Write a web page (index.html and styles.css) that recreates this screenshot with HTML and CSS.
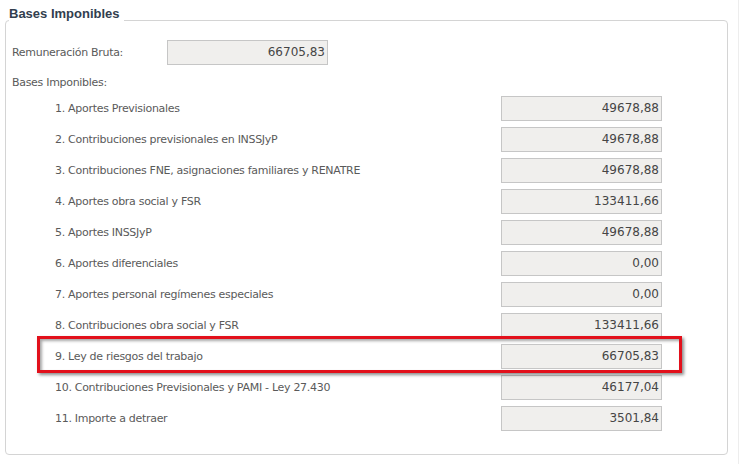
FILE: index.html
```html
<!DOCTYPE html>
<html lang="es">
<head>
<meta charset="utf-8">
<title>Bases Imponibles</title>
<link rel="stylesheet" href="styles.css">
</head>
<body>
<div class="page">
  <fieldset class="group">
    <legend class="group-title">Bases Imponibles</legend>
    <div class="content">
      <div class="bruta">
        <span class="bruta-label">Remuneración Bruta:</span>
        <div class="field">66705,83</div>
      </div>
      <div class="section-label">Bases Imponibles:</div>
      <div class="rows">
        <div class="row"><span class="row-label">1. Aportes Previsionales</span><div class="field">49678,88</div></div>
        <div class="row"><span class="row-label">2. Contribuciones previsionales en INSSJyP</span><div class="field">49678,88</div></div>
        <div class="row"><span class="row-label">3. Contribuciones FNE, asignaciones familiares y RENATRE</span><div class="field">49678,88</div></div>
        <div class="row"><span class="row-label">4. Aportes obra social y FSR</span><div class="field">133411,66</div></div>
        <div class="row"><span class="row-label">5. Aportes INSSJyP</span><div class="field">49678,88</div></div>
        <div class="row"><span class="row-label">6. Aportes diferenciales</span><div class="field">0,00</div></div>
        <div class="row"><span class="row-label">7. Aportes personal regímenes especiales</span><div class="field">0,00</div></div>
        <div class="row"><span class="row-label">8. Contribuciones obra social y FSR</span><div class="field">133411,66</div></div>
        <div class="row row-highlight"><span class="row-label">9. Ley de riesgos del trabajo</span><div class="field">66705,83</div><span class="highlight"></span></div>
        <div class="row"><span class="row-label">10. Contribuciones Previsionales y PAMI - Ley 27.430</span><div class="field">46177,04</div></div>
        <div class="row"><span class="row-label">11. Importe a detraer</span><div class="field">3501,84</div></div>
      </div>
    </div>
  </fieldset>
</div>
</body>
</html>
```

FILE: styles.css
```css
html, body {
  margin: 0;
  padding: 0;
  background: #ffffff;
}

.page {
  box-sizing: border-box;
  width: 739px;
  height: 464px;
  padding: 7px 0 0 5px;
  border-right: 1px solid #ededed;
  font-family: "DejaVu Sans", Verdana, sans-serif;
  font-size: 11px;
  letter-spacing: -0.3px;
  color: #5a5a5a;
}

.group {
  box-sizing: border-box;
  width: 723px;
  margin: 0;
  padding: 0;
  border: 1px solid #d4d4d4;
  border-radius: 4px;
  min-width: 0;
}

.group-title {
  margin-left: 3px;
  padding: 0 4px 13px 0;
  font-family: "Liberation Sans", Arial, sans-serif;
  font-weight: bold;
  font-size: 13px;
  line-height: 13px;
  letter-spacing: 0;
  color: #323e4e;
}

.content {
  padding: 7px 0 23px 6px;
}

.bruta {
  display: flex;
  align-items: center;
  height: 25px;
}

.bruta-label {
  width: 155px;
  line-height: 14px;
}

.field {
  box-sizing: border-box;
  width: 161px;
  height: 25px;
  padding-right: 2px;
  border: 1px solid #c6c6c6;
  background: #f0efed;
  text-align: right;
  font-size: 12px;
  line-height: 23px;
  letter-spacing: 0;
  color: #454545;
}

.section-label {
  margin-top: 11px;
  margin-bottom: 6px;
  line-height: 14px;
}

.rows {
  display: flex;
  flex-direction: column;
  gap: 6px;
}

.row {
  display: flex;
  align-items: center;
  height: 25px;
  padding-left: 43px;
}

.row-label {
  width: 446px;
  line-height: 14px;
}

.row-highlight {
  position: relative;
}

.highlight {
  position: absolute;
  top: -8px;
  bottom: -4px;
  left: 25px;
  right: 45px;
  border: 3px solid #e2101b;
  box-shadow: 2px 2px 3px rgba(0, 0, 0, 0.45), inset 2px 2px 3px rgba(0, 0, 0, 0.35);
  pointer-events: none;
}
```
